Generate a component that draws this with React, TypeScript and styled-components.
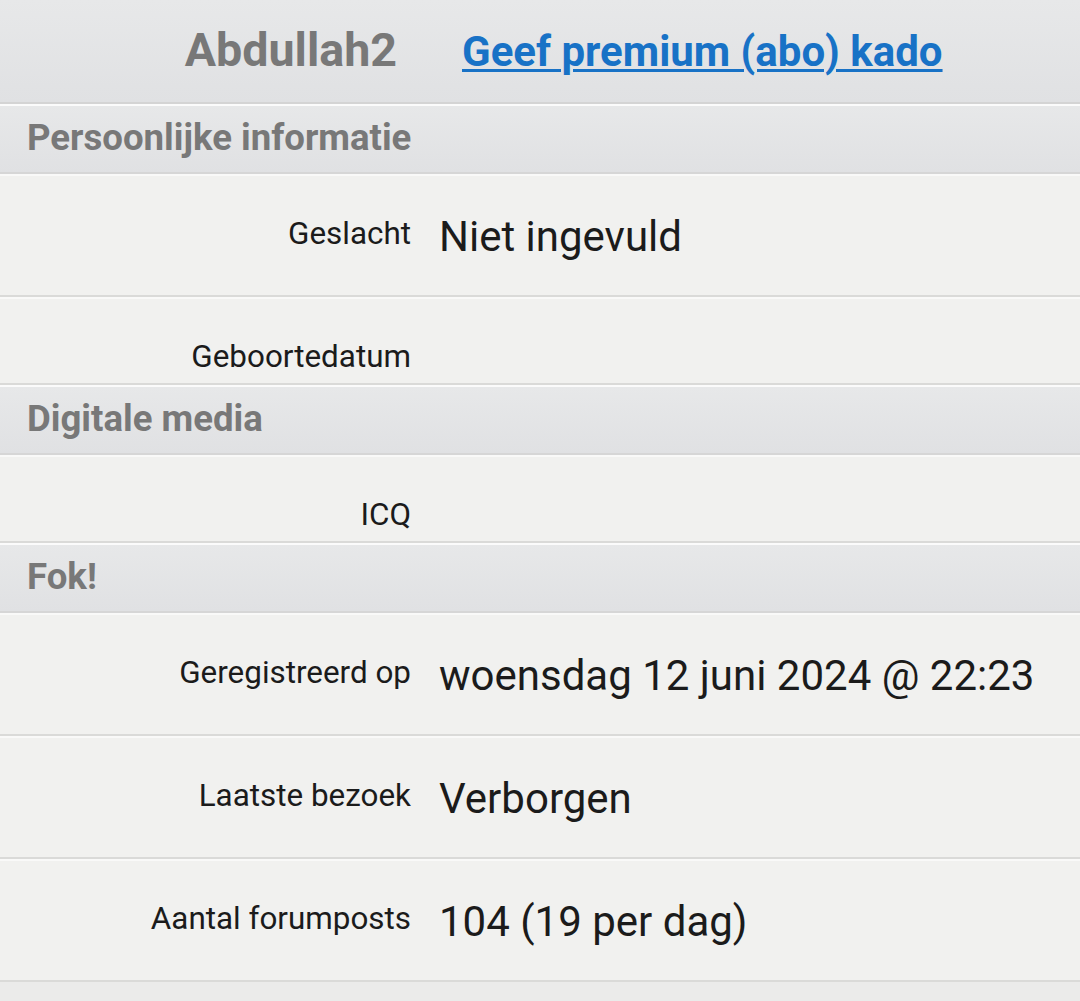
import React from "react";
import styled, { createGlobalStyle } from "styled-components";

const Global = createGlobalStyle`
  html, body { margin: 0; padding: 0; }
  body {
    background: #ebebea;
    font-family: Roboto, "Noto Sans", "Liberation Sans", sans-serif;
  }
`;

const Page = styled.div`
  width: 1080px;
  display: flex;
  flex-direction: column;
`;

const Header = styled.div`
  display: grid;
  grid-template-columns: 425px 1fr;
  align-items: baseline;
  height: 102px;
  background: linear-gradient(#e7e8e9, #e0e1e3);
  border-bottom: 2px solid #d4d4d4;
`;

const UserName = styled.div`
  padding-top: 23px;
  padding-right: 28px;
  text-align: right;
  font-size: 46.6px;
  font-weight: 700;
  color: #787878;
  line-height: normal;
`;

const GiftLink = styled.a`
  padding-left: 37px;
  font-size: 42px;
  font-weight: 700;
  color: #1872c6;
  text-decoration: underline;
  text-decoration-thickness: 3px;
  text-underline-offset: 3px;
  line-height: normal;
`;

const SectionHeader = styled.div`
  background: linear-gradient(#e7e8e9, #e0e1e3);
  border-top: 2px solid #fbfbfb;
  border-bottom: 2px solid #d6d6d6;
  padding: 10px 27px 13px;
  font-size: 36.6px;
  font-weight: 700;
  color: #787878;
  line-height: 43px;
`;

const Row = styled.div`
  display: grid;
  grid-template-columns: 425px 1fr;
  align-items: start;
  background: #f1f1ef;
  border-top: 2px solid #f9f9f8;
  border-bottom: 2px solid #dadad8;
`;

const Label = styled.div`
  padding: 40px 14px 8px 0;
  text-align: right;
  font-size: 31.4px;
  line-height: 36px;
  color: #1b1b1b;
`;

const Value = styled.div`
  padding: 36px 14px 34px 14px;
  font-size: 42px;
  line-height: 49px;
  color: #1b1b1b;
  white-space: nowrap;
`;

type Item = { label: string; value?: string };
type Section = { title: string; items: Item[] };

const sections: Section[] = [
  {
    title: "Persoonlijke informatie",
    items: [{ label: "Geslacht", value: "Niet ingevuld" }, { label: "Geboortedatum" }],
  },
  { title: "Digitale media", items: [{ label: "ICQ" }] },
  {
    title: "Fok!",
    items: [
      { label: "Geregistreerd op", value: "woensdag 12 juni 2024 @ 22:23" },
      { label: "Laatste bezoek", value: "Verborgen" },
      { label: "Aantal forumposts", value: "104 (19 per dag)" },
    ],
  },
];

export default function App() {
  return (
    <>
      <Global />
      <Page>
        <Header>
          <UserName>Abdullah2</UserName>
          <GiftLink href="#">Geef premium (abo) kado</GiftLink>
        </Header>
        {sections.map((s) => (
          <React.Fragment key={s.title}>
            <SectionHeader>{s.title}</SectionHeader>
            {s.items.map((it) => (
              <Row key={it.label}>
                <Label>{it.label}</Label>
                {it.value ? <Value>{it.value}</Value> : null}
              </Row>
            ))}
          </React.Fragment>
        ))}
      </Page>
    </>
  );
}
